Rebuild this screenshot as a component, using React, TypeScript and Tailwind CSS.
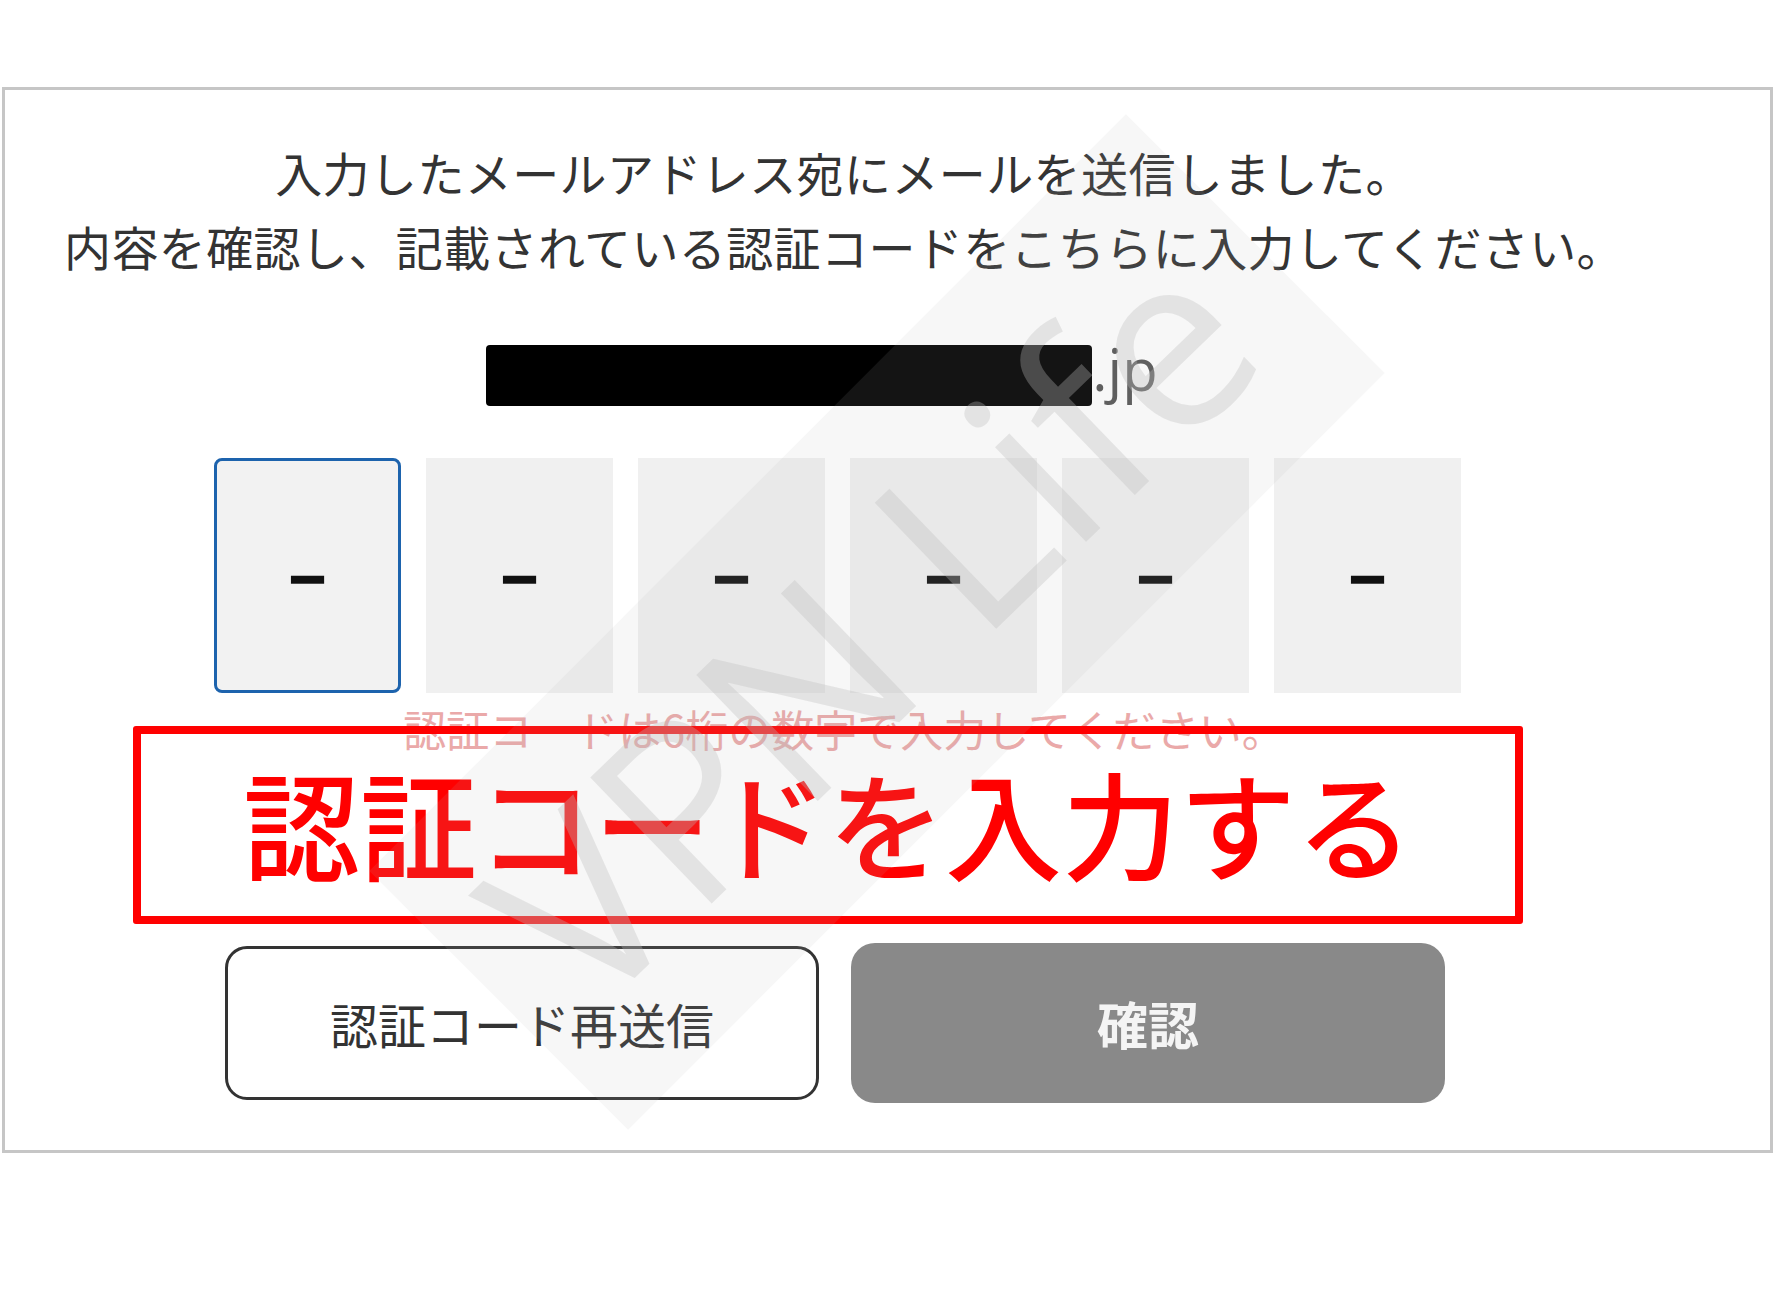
import React from 'react';

const jp = { fontFamily: '"Noto Sans CJK JP", "Noto Sans", sans-serif' };

const CodeBox: React.FC<{ focused?: boolean }> = ({ focused }) => (
    <div
        className={
            focused
                ? 'w-[187px] h-[235px] bg-[#f2f2f2] border-[3px] border-[#1d63ad] rounded-[8px] flex items-center justify-center'
                : 'w-[187px] h-[235px] bg-[#f0f0f0] flex items-center justify-center'
        }
    >
        <span className="text-[64px] font-bold leading-none text-[#111] font-['Liberation_Sans',sans-serif] [-webkit-text-stroke:1.5px_#111] -translate-y-[1px]">–</span>
    </div>
);

export default function App() {
    return (
        <div className="w-[1776px] h-[1300px] bg-white pt-[87px] pl-[2px]" style={jp}>
            <div className="relative w-[1771px] h-[1066px] border-[3px] border-[#c6c6c6] overflow-hidden">
                <div className="flex flex-col items-center pr-[109px] pt-[45px]">
                    <div className="ml-[22px] text-[47px] leading-[74px] tracking-[0.4px] text-[#333] text-center">
                        <p>入力したメールアドレス宛にメールを送信しました。</p>
                        <p>内容を確認し、記載されている認証コードをこちらに入力してください。</p>
                    </div>

                    {/* masked address */}
                    <div className="mt-[62px] mr-[22px] flex items-center h-[61px]">
                        <div className="w-[606px] h-[61px] bg-black rounded-[4px]"></div>
                        <span className="text-[58px] leading-none text-[#555] font-['Open_Sans',sans-serif] mb-[14px]">.jp</span>
                    </div>

                    <div className="mt-[52px] ml-[9px] flex gap-[25px]">
                        <CodeBox focused />
                        <CodeBox />
                        <CodeBox />
                        <CodeBox />
                        <CodeBox />
                        <CodeBox />
                    </div>

                    <p className="mt-[11px] ml-[22px] text-[43px] leading-[48px] text-[#eaa9a9]">認証コードは6桁の数字で入力してください。</p>

                    {/* annotation */}
                    <div className="-mt-[26px] mr-[10px] w-[1390px] h-[198px] border-[8px] border-[#ff0000] rounded-[3px] flex items-center justify-center pb-[8px]">
                        <span className="text-[117px] leading-none font-medium text-[#ff0000] whitespace-nowrap">認証コードを入力する</span>
                    </div>

                    <div className="mt-[19px] ml-[4px] flex items-center gap-[32px]">
                        <button className="w-[594px] h-[154px] border-[3px] border-[#333] rounded-[22px] bg-white text-[48px] text-[#333] flex items-center justify-center">
                            認証コード再送信
                        </button>
                        <button className="w-[594px] h-[160px] rounded-[24px] bg-[#898989] text-[51px] font-bold text-[#f4f4f4] flex items-center justify-center">
                            確認
                        </button>
                    </div>
                </div>

                {/* watermark */}
                <div className="pointer-events-none absolute left-[872px] top-[532px] w-[1070px] h-[366px] -translate-x-1/2 -translate-y-1/2 -rotate-45 bg-[rgba(182,182,182,0.11)]"></div>
                <div className="pointer-events-none absolute left-[861px] top-[533px] -translate-x-1/2 -translate-y-1/2 rotate-[-44deg] whitespace-nowrap text-[245px] leading-none text-[rgba(189,189,189,0.33)] font-['Open_Sans',sans-serif]">
                    VPN Life
                </div>
            </div>
        </div>
    );
}
